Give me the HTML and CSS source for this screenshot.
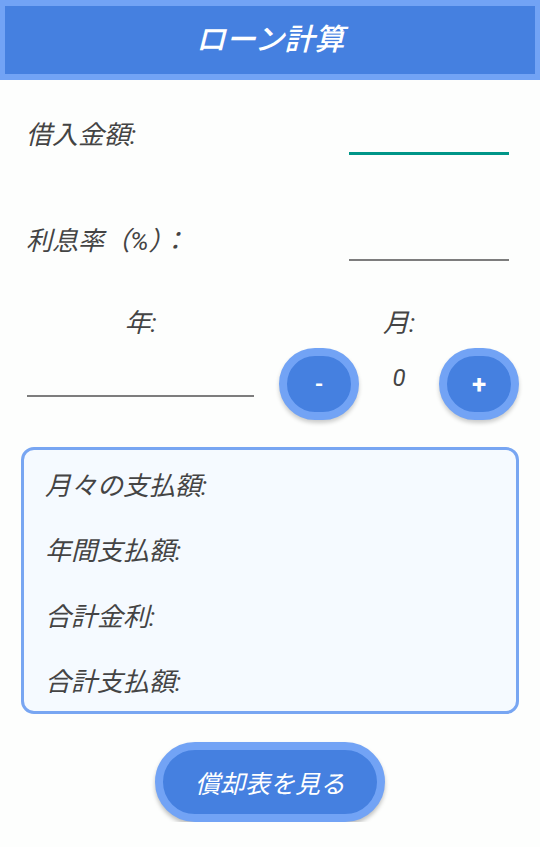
FILE: index.html
```html
<!DOCTYPE html>
<html lang="ja">
<head>
    <meta charset="UTF-8">
    <meta name="viewport" content="width=device-width, initial-scale=1.0">
    <title>ローン計算</title>
    <link rel="stylesheet" href="styles.css">
</head>
<body>
    <header class="app-bar">
        <h1>ローン計算</h1>
    </header>

    <main class="content">
        <div class="field-row">
            <label for="principal">借入金額:</label>
            <input type="text" id="principal" class="line-input is-focused">
        </div>
        <div class="field-row">
            <label for="rate">利息率（%）：</label>
            <input type="text" id="rate" class="line-input">
        </div>

        <div class="term-grid">
            <span class="term-label">年:</span>
            <span class="term-label">月:</span>
            <input type="text" id="years" class="line-input year-input">
            <div class="stepper">
                <button class="round-btn">-</button>
                <span class="month-value">0</span>
                <button class="round-btn plus">+</button>
            </div>
        </div>

        <section class="results">
            <div class="result-row">月々の支払額:</div>
            <div class="result-row">年間支払額:</div>
            <div class="result-row">合計金利:</div>
            <div class="result-row">合計支払額:</div>
        </section>

        <div class="actions">
            <button class="pill-btn">償却表を見る</button>
        </div>
    </main>
</body>
</html>
```

FILE: styles.css
```css
body {
    font-family: Roboto, "Noto Sans CJK JP", sans-serif;
    font-style: italic;
    background-color: #fdfefd;
    color: #444;
    margin: 0;
    padding: 0;
}
.app-bar {
    background-color: #4580e0;
    border: 6px solid #72a3f5;
    border-left-width: 5px;
    border-right-width: 5px;
    height: 68px;
}
.app-bar h1 {
    margin: 0;
    line-height: 68px;
    text-align: center;
    color: #fff;
    font-size: 30px;
    font-weight: 500;
}
.content {
    padding: 0 21px;
}
.field-row {
    display: flex;
    align-items: center;
    justify-content: space-between;
    height: 106px;
    padding: 0 10px 0 5px;
}
.field-row:first-child {
    margin-top: 1px;
}
.field-row label {
    font-size: 26px;
    margin-top: -4px;
}
.line-input {
    width: 160px;
    height: 42px;
    border: none;
    border-bottom: 2px solid #7d7d7d;
    background: transparent;
    box-sizing: border-box;
    outline: none;
}
.line-input.is-focused {
    border-bottom: 3px solid #009688;
}
.term-grid {
    display: grid;
    grid-template-columns: 227px 240px;
    grid-template-rows: 55px 72px;
    column-gap: 25px;
    padding-left: 6px;
}
.term-label {
    text-align: center;
    align-self: center;
    font-size: 26px;
}
.year-input {
    width: 100%;
    height: 26px;
    align-self: center;
}
.stepper {
    display: grid;
    grid-template-columns: 80px 80px 80px;
    align-items: center;
}
.round-btn {
    width: 80px;
    height: 72px;
    border-radius: 36px;
    border: 8px solid #72a3f5;
    background-color: #4580e0;
    color: #fff;
    font-family: Roboto, sans-serif;
    font-weight: 700;
    font-size: 22px;
    box-shadow: 0 3px 4px rgba(0, 0, 0, 0.2);
    padding: 0;
}
.round-btn.plus {
    font-size: 26px;
}
.month-value {
    text-align: center;
    font-size: 24px;
    margin-top: -12px;
}
.results {
    margin-top: 27px;
    height: 267px;
    box-sizing: border-box;
    border: 3px solid #78a6f2;
    border-radius: 13px;
    background-color: #f5faff;
    padding: 0 21px;
    display: grid;
    grid-template-rows: repeat(4, 1fr);
    align-items: center;
}
.result-row {
    font-size: 26px;
    padding-top: 2px;
}
.actions {
    display: flex;
    justify-content: center;
    margin-top: 28px;
}
.pill-btn {
    width: 230px;
    height: 80px;
    border-radius: 40px;
    border: 8px solid #72a3f5;
    background-color: #4580e0;
    color: #fff;
    font-family: Roboto, "Noto Sans CJK JP", sans-serif;
    font-style: italic;
    font-size: 25px;
    box-shadow: 0 3px 4px rgba(0, 0, 0, 0.25);
}
```
